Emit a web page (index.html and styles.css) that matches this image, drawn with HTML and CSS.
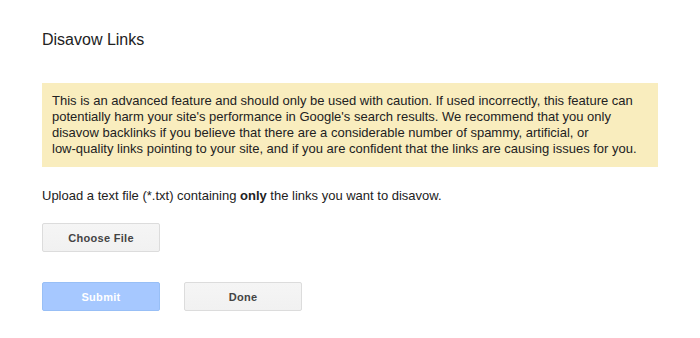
FILE: index.html
```html
<!DOCTYPE html>
<html>
<head>
<meta charset="utf-8">
<link rel="stylesheet" href="styles.css">
</head>
<body>
<div class="page">
  <h1 class="title">Disavow Links</h1>
  <div class="warning">This is an advanced feature and should only be used with caution. If used incorrectly, this feature can potentially harm your site's performance in Google's search results. We recommend that you only disavow backlinks if you believe that there are a considerable number of spammy, artificial, or <span class="nowrap">low-quality</span> links pointing to your site, and if you are confident that the links are causing issues for you.</div>
  <p class="upload">Upload a text file (*.txt) containing <b>only</b> the links you want to disavow.</p>
  <div class="file-row">
    <button class="btn">Choose File</button>
  </div>
  <div class="actions">
    <button class="btn btn-primary" disabled>Submit</button>
    <button class="btn">Done</button>
  </div>
</div>
</body>
</html>
```

FILE: styles.css
```css
html, body {
  margin: 0;
  padding: 0;
  background: #fff;
}
body {
  font-family: "Liberation Sans", Arial, sans-serif;
  color: #222;
}
.page {
  padding: 30px 42px 0 42px;
  width: 616px;
}
.title {
  margin: 0;
  font-size: 16px;
  line-height: 20px;
  font-weight: normal;
  color: #222;
}
.warning {
  margin-top: 33px;
  background: #f9edbe;
  padding: 10px;
  font-size: 13px;
  line-height: 16px;
  color: #222;
}
.nowrap {
  white-space: nowrap;
}
.upload {
  margin: 21px 0 0 0;
  font-size: 13px;
  line-height: 16px;
  color: #222;
}
.file-row {
  margin-top: 19px;
  display: flex;
}
.actions {
  margin-top: 30px;
  display: flex;
  gap: 24px;
}
.btn {
  box-sizing: border-box;
  width: 118px;
  height: 29px;
  padding: 0;
  border: 1px solid #dcdcdc;
  border-radius: 2px;
  background: linear-gradient(#f5f5f5, #f1f1f1);
  font-family: "Liberation Sans", Arial, sans-serif;
  font-size: 11px;
  font-weight: bold;
  letter-spacing: 0.3px;
  color: #444;
  cursor: default;
}
.btn-primary {
  background: #a6c8ff;
  border-color: #98bff6;
  color: #fff;
}
```
